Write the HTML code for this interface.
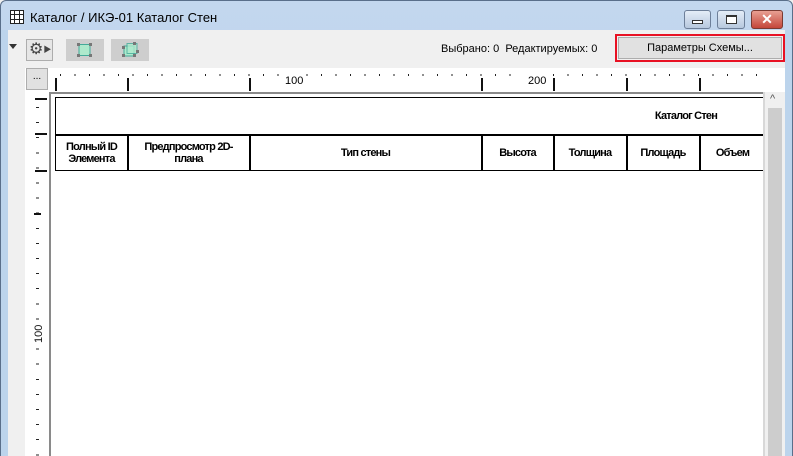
<!DOCTYPE html>
<html><head><meta charset="utf-8"><style>
*{margin:0;padding:0;box-sizing:border-box}
body{width:793px;height:456px;overflow:hidden;font-family:"Liberation Sans","Noto Sans CJK SC",sans-serif;background:#f0f0f0;position:relative}
.abs{position:absolute}
.t{font-size:11px;font-weight:bold;letter-spacing:-0.8px;color:#000;text-align:center;font-family:"Liberation Sans",sans-serif}
</style></head><body>
<div class="abs" style="left:0;top:0;width:793px;height:456px;background:linear-gradient(#c3d7ee,#b6cfeb);border:1px solid #5a6f8a;border-radius:6px 6px 0 0"></div>
<div class="abs" style="left:8px;top:30px;width:777px;height:426px;background:#f0f0f0"></div>
<svg class="abs" style="left:10px;top:10px" width="14" height="14"><rect x="0.5" y="0.5" width="13" height="13" fill="#fff" stroke="#222"/><path d="M4.5 0v14M9.5 0v14M0 4.5h14M0 9.5h14" stroke="#222"/></svg>
<div class="abs" style="left:30px;top:10px;font-size:13px;color:#000">Каталог / ИКЭ-01 Каталог Стен</div>
<div class="abs" style="left:684px;top:10px;width:27px;height:19px;border:1px solid #6d7f99;border-radius:3px;background:linear-gradient(#e4edf8,#b7c8de)"><div style="margin:9px auto 0;width:11px;height:4px;border:1px solid #333;background:#fff"></div></div>
<div class="abs" style="left:717px;top:10px;width:28px;height:19px;border:1px solid #6d7f99;border-radius:3px;background:linear-gradient(#e4edf8,#b7c8de)"><div style="margin:4px auto 0;width:11px;height:9px;border:1px solid #333;border-top-width:2px;background:#fff"></div></div>
<div class="abs" style="left:751px;top:10px;width:32px;height:19px;border:1px solid #7a3a32;border-radius:3px;background:linear-gradient(#e8a093,#c4463a);color:#fff;font-weight:bold;font-size:14px;text-align:center;line-height:17px">✕</div>
<div class="abs" style="left:9px;top:44px;width:0;height:0;border:4px solid transparent;border-top:5px solid #333"></div>
<div class="abs" style="left:26px;top:39px;width:27px;height:22px;border:1px solid #adadad;background:#e6e6e6;font-size:16px;line-height:19px;padding-left:2px;color:#444">⚙<span style="font-size:8px;vertical-align:2px">▶</span></div>
<div class="abs" style="left:66px;top:39px;width:38px;height:22px;background:#cecece"></div>
<svg class="abs" style="left:77px;top:43px" width="16" height="14"><rect x="2" y="1.5" width="11" height="11" fill="#aee9cc" stroke="#4a9"/><rect x="0" y="0" width="3" height="3" fill="#777"/><rect x="12" y="0" width="3" height="3" fill="#777"/><rect x="0" y="11" width="3" height="3" fill="#777"/><rect x="12" y="11" width="3" height="3" fill="#777"/></svg>
<div class="abs" style="left:111px;top:39px;width:38px;height:22px;background:#cecece"></div>
<svg class="abs" style="left:122px;top:42px" width="17" height="16"><rect x="2" y="4" width="10" height="10" fill="#aee9cc" stroke="#4a9"/><rect x="5" y="1.5" width="10" height="10" fill="#aee9cc" stroke="#4a9" opacity=".8"/><rect x="0" y="4" width="3" height="3" fill="#777"/><rect x="11" y="0" width="3" height="3" fill="#777"/><rect x="0" y="12" width="3" height="3" fill="#777"/><rect x="11" y="12" width="3" height="3" fill="#777"/><rect x="14" y="8" width="3" height="3" fill="#777"/></svg>
<div class="abs" style="left:441px;top:43px;font-size:11px;color:#000">Выбрано: 0&nbsp; Редактируемых: 0</div>
<div class="abs" style="left:615px;top:34px;width:170px;height:28px;border:2px solid #e81123"></div>
<div class="abs" style="left:618px;top:37px;width:164px;height:22px;border:1px solid #adadad;background:#e1e1e1;font-size:11px;text-align:center;line-height:20px">Параметры Схемы...</div>
<div class="abs" style="left:25px;top:68px;width:760px;height:388px;background:#fff"></div>
<div class="abs" style="left:26px;top:68px;width:22px;height:22px;border:1px solid #adadad;background:#e1e1e1;font-size:10px;text-align:center;line-height:16px">...</div>
<div class="abs" style="left:49px;top:92px;width:716px;height:364px;border-left:2px solid #8a8a8a;border-top:2px solid #8a8a8a;background:#fff"></div>
<div class="abs" style="left:60px;top:74px;width:700px;height:2px;background:repeating-linear-gradient(90deg,#222 0 1px,transparent 1px 14.5px)"></div>
<div class="abs" style="left:36px;top:107px;width:3px;height:349px;background:repeating-linear-gradient(180deg,#222 0 1px,transparent 1px 15.1px)"></div>
<div class="abs" style="left:30px;top:320px;width:15px;height:28px;background:#fff"></div>
<svg class="abs" style="left:0;top:0" width="793" height="456">
<g fill="#111">
<rect x="55" y="78" width="2" height="13"/><rect x="127" y="78" width="2" height="13"/><rect x="249" y="78" width="2" height="13"/><rect x="481" y="78" width="2" height="13"/><rect x="553" y="78" width="2" height="13"/><rect x="626" y="78" width="2" height="13"/><rect x="699" y="78" width="2" height="13"/>
<rect x="35" y="98" width="12" height="2"/><rect x="35" y="133" width="12" height="2"/><rect x="35" y="170" width="12" height="2"/><rect x="34" y="213" width="7" height="2"/>
</g>
<g fill="#fff"><rect x="280" y="72" width="24" height="5"/><rect x="524" y="72" width="24" height="5"/></g>
<text x="285" y="84" font-size="11" font-family="Liberation Sans">100</text>
<text x="528" y="84" font-size="11" font-family="Liberation Sans">200</text>
<text transform="translate(42,343) rotate(-90)" font-size="11" font-family="Liberation Sans" fill="#111">100</text>
</svg>
<div class="abs" style="left:55px;top:97px;width:710px;height:74px;border:1.5px solid #000;border-right:none"></div>
<div class="abs" style="left:55px;top:134px;width:710px;height:1.5px;background:#000"></div>
<div class="abs t" style="left:606px;top:110px;width:160px">Каталог Стен</div>
<div class="abs" style="left:127px;top:134px;width:1.5px;height:37px;background:#000"></div>
<div class="abs" style="left:249px;top:134px;width:1.5px;height:37px;background:#000"></div>
<div class="abs" style="left:481px;top:134px;width:1.5px;height:37px;background:#000"></div>
<div class="abs" style="left:553px;top:134px;width:1.5px;height:37px;background:#000"></div>
<div class="abs" style="left:626px;top:134px;width:1.5px;height:37px;background:#000"></div>
<div class="abs" style="left:699px;top:134px;width:1.5px;height:37px;background:#000"></div>
<div class="abs t" style="left:56px;top:141px;width:71px;line-height:12px">Полный ID<br>Элемента</div>
<div class="abs t" style="left:128px;top:141px;width:121px;line-height:12px">Предпросмотр 2D-<br>плана</div>
<div class="abs t" style="left:250px;top:147px;width:231px">Тип стены</div>
<div class="abs t" style="left:482px;top:147px;width:71px">Высота</div>
<div class="abs t" style="left:554px;top:147px;width:72px">Толщина</div>
<div class="abs t" style="left:627px;top:147px;width:72px">Площадь</div>
<div class="abs t" style="left:700px;top:147px;width:65px">Объем</div>
<div class="abs" style="left:763px;top:92px;width:2px;height:364px;background:#d8d8d8"></div>
<div class="abs" style="left:765px;top:92px;width:20px;height:364px;background:#f0f0f0"></div>
<div class="abs" style="left:770px;top:93px;font-size:11px;color:#555">^</div>
<div class="abs" style="left:768px;top:108px;width:14px;height:348px;background:#cdcdcd"></div>
<div class="abs" style="left:785px;top:30px;width:7px;height:426px;background:#bcd4ec"></div>
<div class="abs" style="left:1px;top:30px;width:7px;height:426px;background:#bcd4ec"></div>
</body></html>
